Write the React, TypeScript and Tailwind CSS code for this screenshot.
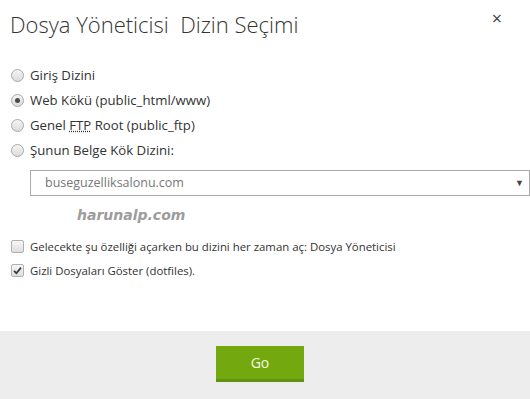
import React from 'react';

function Radio({ checked }: { checked?: boolean }) {
  return (
    <span className="flex h-[13px] w-[13px] shrink-0 items-center justify-center rounded-full border border-[#a9a9a9] bg-gradient-to-b from-[#f4f4f4] to-[#dcdcdc]">
      {checked && <span className="h-[5px] w-[5px] rounded-full bg-[#4a4a4a]" />}
    </span>
  );
}

function Check({ checked }: { checked?: boolean }) {
  return (
    <span className="flex h-[13px] w-[13px] shrink-0 items-center justify-center rounded-[2px] border border-[#b0b0b0] bg-gradient-to-b from-[#f6f6f6] to-[#dedede]">
      {checked && (
        <svg width="9" height="9" viewBox="0 0 9 9">
          <path d="M1 4.8 L3.4 7.2 L8 1.6" fill="none" stroke="#3a3a3a" strokeWidth="1.8" />
        </svg>
      )}
    </span>
  );
}

const RADIOS = [
  { label: 'Giriş Dizini' },
  { label: 'Web Kökü (public_html/www)', checked: true },
  { label: 'ftp' },
  { label: 'Şunun Belge Kök Dizini:' },
];

export default function App() {
  return (
    <div className="flex h-[399px] w-[530px] flex-col overflow-hidden bg-white font-['Open_Sans',sans-serif] text-[#333]">
      <div className="flex items-start justify-between pl-[10px] pr-[28px] pt-[8px]">
        <h1 className="whitespace-pre text-[22px] font-light leading-[32px] text-[#333]">Dosya Yöneticisi  Dizin Seçimi</h1>
        <span className="mt-[1px] text-[18px] leading-none text-[#444]">×</span>
      </div>

      <div className="mt-[26px] flex flex-col gap-[6px] pl-[11px]">
        {RADIOS.map((r) => (
          <label key={r.label} className="flex h-[19px] items-center gap-[6px] text-[13.2px] text-[#333]">
            <Radio checked={r.checked} />
            {r.label === 'ftp' ? (
              <span>
                Genel <abbr className="underline decoration-dotted">FTP</abbr> Root (public_ftp)
              </span>
            ) : (
              <span>{r.label}</span>
            )}
          </label>
        ))}
      </div>

      <div className="mt-[10px] ml-[30px] flex h-[26px] items-center justify-between border border-[#aaa] pl-[14px] pr-[5px] text-[12.5px] text-[#777]">
        <span>buseguzelliksalonu.com</span>
        <span className="text-[9px] text-[#444]">▼</span>
      </div>

      <div className="ml-[77px] mt-[10px] font-['DejaVu_Sans',sans-serif] text-[14px] font-bold italic leading-[18px] text-[#9c9c9c]">
        harunalp.com
      </div>

      <div className="mt-[13px] flex flex-col gap-[5px] pl-[11px] text-[11.4px] text-[#333]">
        <label className="flex h-[19px] items-center gap-[6px]">
          <Check />
          <span>Gelecekte şu özelliği açarken bu dizini her zaman aç: Dosya Yöneticisi</span>
        </label>
        <label className="flex h-[19px] items-center gap-[6px]">
          <Check checked />
          <span>Gizli Dosyaları Göster (dotfiles).</span>
        </label>
      </div>

      <div className="mt-auto flex h-[68px] items-start justify-center bg-[#ededed] pr-[10px] pt-[15px]">
        <button className="flex h-[36px] w-[88px] items-center justify-center border-b-[3px] border-[#5e9410] bg-[#73a80f] text-[14px] text-[#f5fbe3]">
          Go
        </button>
      </div>
    </div>
  );
}
